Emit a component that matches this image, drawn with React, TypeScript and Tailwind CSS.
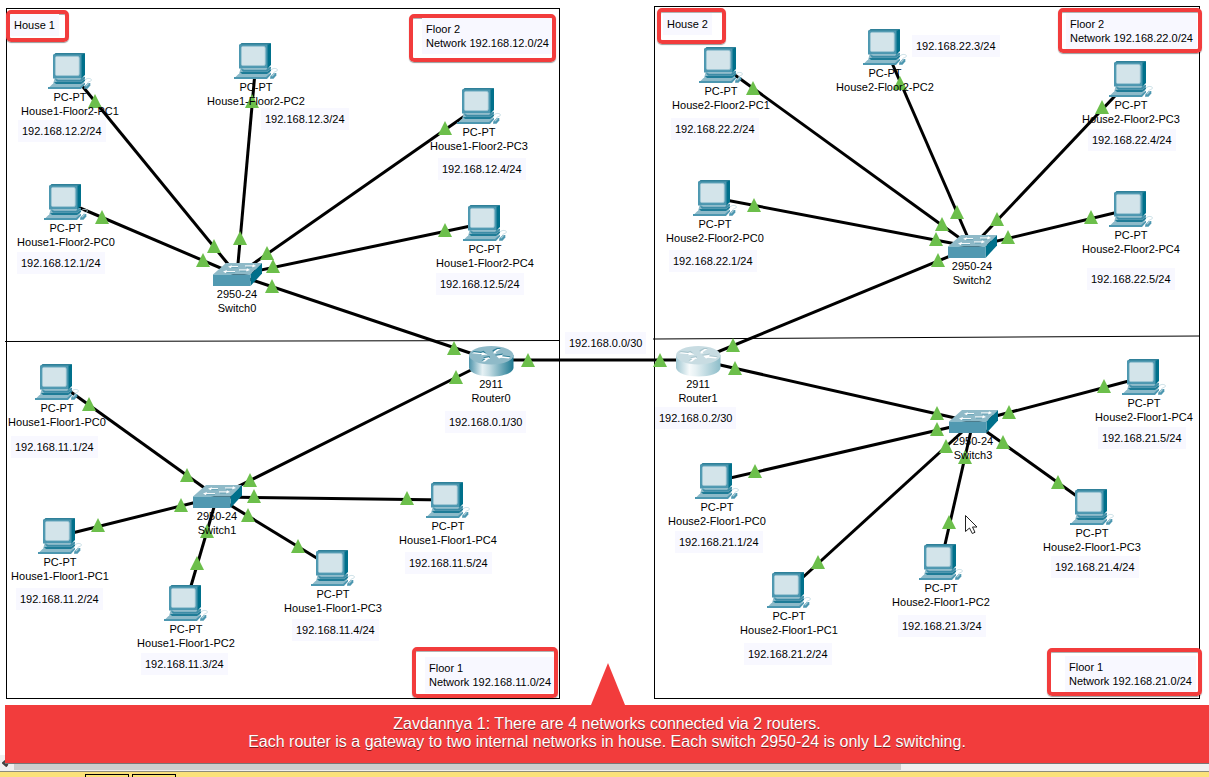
import React from "react";

type Point = [number, number];
type Kind = "pc" | "switch" | "router";

interface Device {
  kind: Kind;
  model: string;
  name: string;
  x: number;
  y: number;
  faded?: boolean;
}

interface Note {
  text: string;
  x: number;
  y: number;
}

interface Callout {
  lines: string[];
  x: number;
  y: number;
  w: number;
  h: number;
  padX: number;
  padY: number;
}

interface Cable {
  from: string;
  to: string;
  ports: [Point, Point];
}

const pc = (name: string, x: number, y: number): Device => ({ kind: "pc", model: "PC-PT", name, x, y });
const sw = (name: string, x: number, y: number): Device => ({ kind: "switch", model: "2950-24", name, x, y });

const devices: Device[] = [
  pc("House1-Floor2-PC0", 44, 184),
  pc("House1-Floor2-PC1", 48, 53),
  pc("House1-Floor2-PC2", 234, 43),
  pc("House1-Floor2-PC3", 457, 88),
  pc("House1-Floor2-PC4", 463, 205),
  pc("House1-Floor1-PC0", 35, 364),
  pc("House1-Floor1-PC1", 38, 518),
  pc("House1-Floor1-PC2", 164, 585),
  pc("House1-Floor1-PC3", 311, 550),
  pc("House1-Floor1-PC4", 426, 482),
  pc("House2-Floor2-PC0", 693, 180),
  pc("House2-Floor2-PC1", 699, 47),
  pc("House2-Floor2-PC2", 863, 29),
  pc("House2-Floor2-PC3", 1109, 61),
  pc("House2-Floor2-PC4", 1109, 191),
  pc("House2-Floor1-PC0", 695, 463),
  pc("House2-Floor1-PC1", 767, 572),
  pc("House2-Floor1-PC2", 919, 544),
  pc("House2-Floor1-PC3", 1070, 489),
  pc("House2-Floor1-PC4", 1122, 359),
  sw("Switch0", 213, 263),
  sw("Switch1", 193, 485),
  sw("Switch2", 948, 235),
  sw("Switch3", 949, 410),
  { kind: "router", model: "2911", name: "Router0", x: 469, y: 346 },
  { kind: "router", model: "2911", name: "Router1", x: 676, y: 346, faded: true },
];

const cables: Cable[] = [
  { from: "House1-Floor2-PC1", to: "Switch0", ports: [[95, 101], [214, 246]] },
  { from: "House1-Floor2-PC2", to: "Switch0", ports: [[252, 101], [240, 238]] },
  { from: "House1-Floor2-PC0", to: "Switch0", ports: [[102, 217], [203, 260]] },
  { from: "House1-Floor2-PC3", to: "Switch0", ports: [[445, 128], [267, 253]] },
  { from: "House1-Floor2-PC4", to: "Switch0", ports: [[445, 230], [273, 266]] },
  { from: "Router0", to: "Switch0", ports: [[454, 348], [272, 286]] },
  { from: "Router0", to: "Switch1", ports: [[456, 377], [250, 480]] },
  { from: "Router0", to: "Router1", ports: [[528, 360], [660, 360]] },
  { from: "House1-Floor1-PC0", to: "Switch1", ports: [[89, 404], [187, 475]] },
  { from: "House1-Floor1-PC1", to: "Switch1", ports: [[98, 525], [181, 505]] },
  { from: "House1-Floor1-PC2", to: "Switch1", ports: [[197, 563], [207, 531]] },
  { from: "House1-Floor1-PC3", to: "Switch1", ports: [[298, 546], [248, 515]] },
  { from: "House1-Floor1-PC4", to: "Switch1", ports: [[407, 498], [254, 496]] },
  { from: "House2-Floor2-PC1", to: "Switch2", ports: [[753, 88], [942, 224]] },
  { from: "House2-Floor2-PC0", to: "Switch2", ports: [[754, 205], [936, 239]] },
  { from: "House2-Floor2-PC2", to: "Switch2", ports: [[900, 83], [957, 212]] },
  { from: "House2-Floor2-PC3", to: "Switch2", ports: [[1102, 107], [997, 219]] },
  { from: "House2-Floor2-PC4", to: "Switch2", ports: [[1091, 217], [1008, 237]] },
  { from: "Router1", to: "Switch2", ports: [[733, 345], [938, 260]] },
  { from: "Router1", to: "Switch3", ports: [[735, 368], [937, 413]] },
  { from: "House2-Floor1-PC0", to: "Switch3", ports: [[755, 471], [937, 429]] },
  { from: "House2-Floor1-PC1", to: "Switch3", ports: [[818, 562], [946, 446]] },
  { from: "House2-Floor1-PC2", to: "Switch3", ports: [[949, 522], [965, 457]] },
  { from: "House2-Floor1-PC3", to: "Switch3", ports: [[1058, 482], [1003, 442]] },
  { from: "House2-Floor1-PC4", to: "Switch3", ports: [[1104, 386], [1009, 412]] },
];

const notes: Note[] = [
  { text: "192.168.12.1/24", x: 17, y: 252 },
  { text: "192.168.12.2/24", x: 18, y: 120 },
  { text: "192.168.12.3/24", x: 261, y: 108 },
  { text: "192.168.12.4/24", x: 438, y: 158 },
  { text: "192.168.12.5/24", x: 436, y: 273 },
  { text: "192.168.11.1/24", x: 11, y: 436 },
  { text: "192.168.11.2/24", x: 16, y: 588 },
  { text: "192.168.11.3/24", x: 141, y: 653 },
  { text: "192.168.11.4/24", x: 292, y: 619 },
  { text: "192.168.11.5/24", x: 405, y: 552 },
  { text: "192.168.0.1/30", x: 445, y: 411 },
  { text: "192.168.0.0/30", x: 565, y: 332 },
  { text: "192.168.0.2/30", x: 655, y: 407 },
  { text: "192.168.22.1/24", x: 669, y: 250 },
  { text: "192.168.22.2/24", x: 671, y: 118 },
  { text: "192.168.22.3/24", x: 912, y: 35 },
  { text: "192.168.22.4/24", x: 1088, y: 129 },
  { text: "192.168.22.5/24", x: 1087, y: 268 },
  { text: "192.168.21.1/24", x: 675, y: 531 },
  { text: "192.168.21.2/24", x: 744, y: 643 },
  { text: "192.168.21.3/24", x: 898, y: 615 },
  { text: "192.168.21.4/24", x: 1051, y: 556 },
  { text: "192.168.21.5/24", x: 1098, y: 427 },
];

const callouts: Callout[] = [
  { lines: ["House 1"], x: 6, y: 10, w: 63, h: 32, padX: 0, padY: 0 },
  { lines: ["House 2"], x: 657, y: 8, w: 69, h: 36, padX: 2, padY: 1 },
  { lines: ["Floor 2", "Network 192.168.12.0/24"], x: 409, y: 14, w: 147, h: 48, padX: 9, padY: 0 },
  { lines: ["Floor 2", "Network 192.168.22.0/24"], x: 1058, y: 8, w: 144, h: 45, padX: 4, padY: 1 },
  { lines: ["Floor 1", "Network 192.168.11.0/24"], x: 412, y: 647, w: 146, h: 51, padX: 9, padY: 6 },
  { lines: ["Floor 1", "Network 192.168.21.0/24"], x: 1047, y: 648, w: 155, h: 48, padX: 14, padY: 4 },
];

const centreOf = (name: string): Point => {
  const d = devices.find((item) => item.name === name)!;
  if (d.kind === "pc") return [d.x + 22, d.y + 18];
  if (d.kind === "switch") return [d.x + 24, d.y + 12];
  return [d.x + 22, d.y + 14];
};

function PcIcon() {
  return (
    <svg width="44" height="36" viewBox="0 0 44 36" aria-hidden="true" className="block">
      <path d="M7 24 H36 V30 L33 34 H5 V31Z" fill="#8dbac9" />
      <path d="M5 2.500 L7.500 0 H37 L33.500 2.500Z" fill="#2f8099" />
      <path d="M33 2 L37 0 V22 L33 26Z" fill="#00708b" />
      <rect x="5" y="1.500" width="28.500" height="24" fill="#4c97b0" />
      <rect x="7.400" y="3.400" width="23.800" height="19.200" rx="1.500" fill="#d3e4ea" stroke="#a3c9d5" strokeWidth="0.800" />
      <path d="M7 26.300 H33 L37 23.500 V25.500 L33 28.700 H9Z" fill="#3d8ca6" />
      <path d="M8 25.400 H33 L32 26.500 H10Z" fill="#b5d2dc" />
      <path d="M6 29 H33 L37 26 V28 L33 31 H8Z" fill="#1f7c97" />
      <path d="M4.500 31 H36 L32 34 H1.500Z" fill="#8dbac9" />
      <path d="M0 34 H32 L37 29.500 V31.500 L33 36 H0Z" fill="#4c97b0" />
      <path d="M37 27 C40 24 44.500 26 43.300 27.500 C42 29 38.500 28.500 40.500 31" fill="none" stroke="#c3dbe3" strokeWidth="0.900" />
      <path d="M36.500 33 L40 30 H42.300 V32.500 L39.500 35.700 H36Z" fill="#4c97b0" />
      <path d="M37 33 L40 30.300 H41.500 L38.500 33.500Z" fill="#a9cbd6" />
    </svg>
  );
}

function SwitchIcon() {
  return (
    <svg width="49" height="24" viewBox="0 0 49 24" aria-hidden="true" className="block">
      <path d="M0 11.500 L13 0 H49 L37.500 11.500Z" fill="#8fbac8" />
      <path d="M37.500 11.500 L49 0 V10.500 L37.500 23Z" fill="#00708b" />
      <rect y="11.500" width="37.500" height="11.500" fill="#5199b1" />
      <g stroke="#5c9bb0" strokeWidth="1" fill="none">
        <path d="M17 4.600 H25 M33 4 H40 M12 9.600 H22 M27 8 H34" />
      </g>
      <g stroke="#fff" strokeWidth="1" fill="none">
        <path d="M17 3.600 H25 M32 2.900 H41 M12 8.600 H22 M26 6.900 H35" />
      </g>
      <g fill="#fff">
        <path d="M15 3.700 L19 2.200 L18 5.200Z" />
        <path d="M43 2.900 L40 1.300 L39 4.500Z" />
        <path d="M10 8.600 L14 7 L13 10.200Z" />
        <path d="M37 6.900 L34 5.300 L33 8.500Z" />
      </g>
    </svg>
  );
}

function RouterIcon({ faded }: { faded?: boolean }) {
  const id = faded ? "router-body-faded" : "router-body";
  return (
    <svg width="45" height="31" viewBox="0 0 45 31" aria-hidden="true" className="block">
      <defs>
        <linearGradient id={id}>
          <stop offset="0" stopColor={faded ? "#9fc6d1" : "#4c93aa"} />
          <stop offset="0.300" stopColor={faded ? "#f6fafb" : "#e6f1f4"} />
          <stop offset="0.450" stopColor={faded ? "#e5f0f3" : "#c5dde4"} />
          <stop offset="1" stopColor={faded ? "#8dbdc9" : "#1d7891"} />
        </linearGradient>
      </defs>
      <path d="M0 9 V22 C1 27 11 30.500 22.500 30.500 S44 27 44.500 22 V9Z" fill={`url(#${id})`} />
      <ellipse cx="22.250" cy="9.250" rx="22.250" ry="9.250" fill={faded ? "#c8dce2" : "#8fbac8"} />
      <g fill={faded ? "#a9c5cd" : "#2f7f98"}>
        <path d="M3 6.300 L5 5.100 L12 5.800 L14.500 4.800 L17.500 7.500 L11 8.500 L12 7.300Z" />
        <path d="M24 6.300 L23.500 4.300 L28 2 L32 2 L30 3.200 L27.500 5 L28 6Z" />
        <path d="M26 8.800 L34 7.600 L33 9.200 L41.500 10.200 L40 11.800 L31.500 10.800 L29.500 11.700Z" />
        <path d="M14 11.200 L20.500 10 L21 12 L19.500 12 L16 14.800 L12.500 14.600 L16 12.200Z" />
      </g>
      <g fill="#fff">
        <path d="M3 7.300 L5 6.300 L12 7 L14 6.300 L18.500 8.500 L12 9.200 L13 8.300Z" />
        <path d="M24.500 7.500 L24.500 5.500 L28.500 3 L31.500 3 L28 5.200 L26.500 6.500 L28 7.200Z" />
        <path d="M27 9.800 L34 8.800 L33 10.200 L41 11.300 L40 12.600 L32 11.700 L30 12.400Z" />
        <path d="M14.500 12.300 L20 11.300 L21 13 L19.500 12.800 L16 15.600 L13 15.400 L16.500 12.900Z" />
      </g>
    </svg>
  );
}

function DeviceNode({ device }: { device: Device }) {
  const [cx] = centreOf(device.name);
  return (
    <figure
      className="absolute flex w-32 -translate-x-1/2 flex-col items-center"
      style={{ left: cx, top: device.y }}
    >
      {device.kind === "pc" && <PcIcon />}
      {device.kind === "switch" && <SwitchIcon />}
      {device.kind === "router" && <RouterIcon faded={device.faded} />}
    </figure>
  );
}

function DeviceLabel({ device }: { device: Device }) {
  const [cx] = centreOf(device.name);
  const drop = device.kind === "pc" ? 37 : device.kind === "switch" ? 24 : 31;
  return (
    <div
      className="absolute w-32 -translate-x-1/2 text-center"
      style={{ left: cx, top: device.y + drop }}
    >
      <p>{device.model}</p>
      <p>{device.name}</p>
    </div>
  );
}

function Topology() {
  return (
    <main className="relative h-[705px] min-w-[1209px] shrink-0 overflow-hidden text-[11px] leading-[14px] text-black">
      <svg className="absolute inset-0 h-full w-full" aria-hidden="true">
        <g fill="none" stroke="#000" strokeWidth="1">
          <rect x="6.500" y="8.500" width="553" height="690" />
          <rect x="654.500" y="6.500" width="545" height="692" />
          <path d="M5 341.500 L559 340.500 M653 339 L1200 336" />
        </g>
      </svg>

      {notes.map((note) => (
        <p
          key={note.text}
          className="absolute bg-[#f8f8ff] px-1 py-1 whitespace-nowrap"
          style={{ left: note.x, top: note.y }}
        >
          {note.text}
        </p>
      ))}

      <svg className="absolute inset-0 h-full w-full" aria-hidden="true">
        {cables.map(({ from, to }) => {
          const [x1, y1] = centreOf(from);
          const [x2, y2] = centreOf(to);
          return <line key={from + to} x1={x1} y1={y1} x2={x2} y2={y2} stroke="#000" strokeWidth="3" />;
        })}
      </svg>

      {devices.map((device) => (
        <DeviceNode key={device.name} device={device} />
      ))}

      <svg className="absolute inset-0 h-full w-full" aria-hidden="true">
        {cables.flatMap(({ from, to, ports }) =>
          ports.map(([x, y], i) => (
            <path key={from + to + i} d={`M${x} ${y - 7} L${x + 7} ${y + 7} H${x - 7}Z`} fill="#6cbf4b" />
          ))
        )}
        <path
          d="M965.500 515.500 V531.500 L969.500 528 L972.300 533.500 L975 532.300 L972.500 527 H977Z"
          fill="#fff"
          stroke="#222"
          strokeWidth="1"
        />
      </svg>

      {devices.map((device) => (
        <DeviceLabel key={device.name} device={device} />
      ))}

      {callouts.map((box) => (
        <section
          key={box.lines.join() + box.x}
          className="absolute flex items-start overflow-hidden rounded-[5px] border-[4px] border-[#f23c3c] shadow-[0_1px_1px_rgba(0,0,0,0.4),inset_0_1px_0_rgba(0,0,0,0.3)]"
          style={{ left: box.x, top: box.y, width: box.w, height: box.h, paddingLeft: box.padX, paddingTop: box.padY }}
        >
          <div className="bg-[#f8f8ff] px-1 py-1 whitespace-nowrap">
            {box.lines.map((line) => (
              <p key={line}>{line}</p>
            ))}
          </div>
        </section>
      ))}
    </main>
  );
}

export default function App() {
  return (
    <div className="flex h-screen flex-col overflow-hidden bg-white font-['Liberation_Sans',Arial,sans-serif]">
      <Topology />

      <div className="relative z-10 -mb-2 ml-[5px] flex h-[58px] shrink-0 flex-col justify-center bg-[#f23c3c] pb-0.5 text-center text-[16px] leading-[18px] text-white shadow-[0_1px_0_#777] [text-shadow:0_1px_0_rgba(0,0,0,0.5)]">
        <svg
          className="absolute bottom-full left-1/2 -translate-x-1/2"
          width="36"
          height="42"
          viewBox="0 0 36 42"
          aria-hidden="true"
        >
          <path d="M19 0 L36 42 H2Z" fill="#f23c3c" />
        </svg>
        <p>Zavdannya 1: There are 4 networks connected via 2 routers.</p>
        <p>Each router is a gateway to two internal networks in house. Each switch 2950-24 is only L2 switching.</p>
      </div>

      <div className="flex h-4 shrink-0 bg-[#f0f0f0] pb-px">
        <button type="button" aria-label="Scroll left" className="flex w-3.5 items-center pl-0.5">
          <svg width="7" height="8" viewBox="0 0 7 8" aria-hidden="true">
            <path d="M5 0.500 L1 4 L5 7.500 M1 4 L6 6" fill="none" stroke="#444" strokeWidth="2" />
          </svg>
        </button>
        <div className="grow-0 basis-[887px] bg-[#cdcdcd]" />
      </div>

      <footer className="flex h-1.5 shrink-0 gap-[3px] overflow-hidden border-t border-[#8c8c7c] bg-[#fbe27a] pt-0.5 pl-[85px]">
        <div className="h-4 w-11 border border-black" />
        <div className="h-4 w-11 border border-black" />
      </footer>
    </div>
  );
}
